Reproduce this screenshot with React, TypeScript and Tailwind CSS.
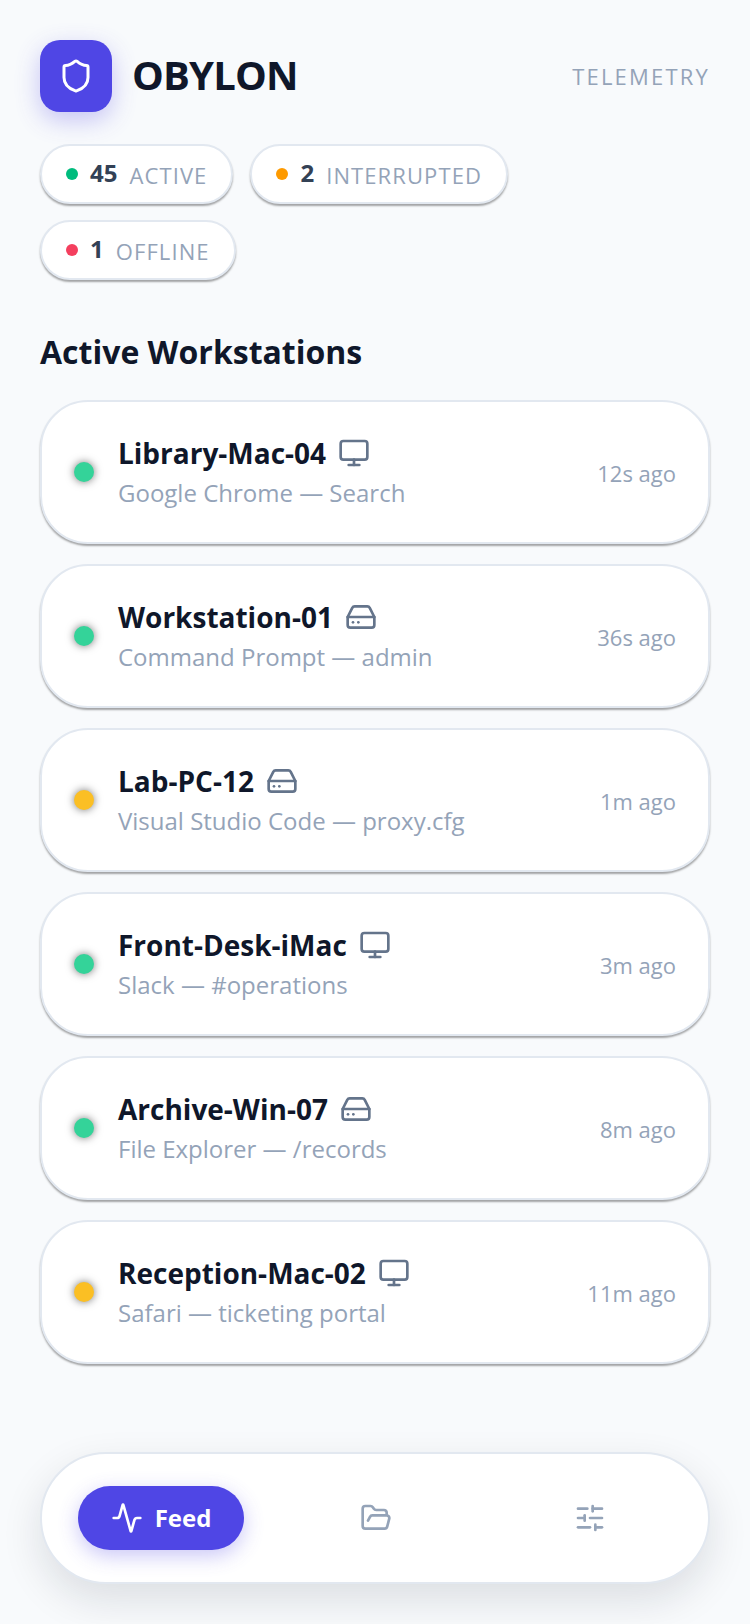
import { Activity, FolderOpen, HardDrive, Monitor, Shield, SlidersHorizontal } from 'lucide-react'

const stats = [
  { dot: 'bg-emerald-500', count: '45', label: 'ACTIVE' },
  { dot: 'bg-amber-500', count: '2', label: 'INTERRUPTED' },
  { dot: 'bg-[#f43f5e]', count: '1', label: 'OFFLINE' },
]

const stations = [
  { name: 'Library-Mac-04', app: 'Google Chrome — Search', time: '12s ago', dot: 'bg-[#34d399]', mac: true },
  { name: 'Workstation-01', app: 'Command Prompt — admin', time: '36s ago', dot: 'bg-[#34d399]', mac: false },
  { name: 'Lab-PC-12', app: 'Visual Studio Code — proxy.cfg', time: '1m ago', dot: 'bg-[#fbbf24]', mac: false },
  { name: 'Front-Desk-iMac', app: 'Slack — #operations', time: '3m ago', dot: 'bg-[#34d399]', mac: true },
  { name: 'Archive-Win-07', app: 'File Explorer — /records', time: '8m ago', dot: 'bg-[#34d399]', mac: false },
  { name: 'Reception-Mac-02', app: 'Safari — ticketing portal', time: '11m ago', dot: 'bg-[#fbbf24]', mac: true },
]

export default function App() {
  return (
    <div className="flex h-[1624px] w-[750px] flex-col overflow-hidden bg-[#f8fafc] px-10 pt-10 font-['Open_Sans',sans-serif]">
      <header className="flex h-[72px] items-center justify-between">
        <div className="flex items-center gap-5">
          <div className="flex h-[72px] w-[72px] items-center justify-center rounded-[20px] bg-[#4f46e5] shadow-[0_8px_24px_rgba(79,70,229,0.3)]">
            <Shield className="h-9 w-9 text-white" strokeWidth={2} />
          </div>
          <h1 className="mb-[2px] text-[40px] leading-[48px] font-bold tracking-[-0.8px] text-[#0f172a]">OBYLON</h1>
        </div>
        <span className="text-[22px] tracking-[2.2px] text-[#94a3b8]">TELEMETRY</span>
      </header>

      <div className="mt-8 flex flex-wrap gap-x-[17px] gap-y-4">
        {stats.map((s) => (
          <div
            key={s.label}
            className="flex h-[60px] items-center gap-3 rounded-full border-2 border-[#e2e8f0] bg-white px-6 shadow-[0_2px_2px_rgba(0,0,0,0.35)]"
          >
            <span className={`h-3 w-3 rounded-full ${s.dot}`} />
            <span className="mb-[2px] text-[24px] font-bold text-[#334155]">{s.count}</span>
            <span className="mt-[2px] text-[22px] tracking-[1.1px] text-[#94a3b8]">{s.label}</span>
          </div>
        ))}
      </div>

      <h2 className="mt-[52px] text-[32px] leading-10 font-bold text-[#0f172a]">Active Workstations</h2>

      <div className="mt-7 flex flex-col gap-5">
        {stations.map((st) => (
          <div
            key={st.name}
            className="flex h-[144px] items-center justify-between rounded-[48px] border-2 border-[#e2e8f0] bg-white px-8 shadow-[0_2px_2px_rgba(0,0,0,0.35)]"
          >
            <div className="flex items-center gap-6">
              <span className={`h-5 w-5 rounded-full ${st.dot} shadow-[0_0_8px_rgba(0,0,0,0.55)]`} />
              <div className="flex flex-col gap-[6px]">
                <div className="flex items-center gap-3">
                  <span className="text-[28px] leading-9 font-bold text-[#0f172a]">{st.name}</span>
                  {st.mac ? (
                    <Monitor className="h-8 w-8 text-[#64748b]" strokeWidth={2} />
                  ) : (
                    <HardDrive className="h-8 w-8 text-[#64748b]" strokeWidth={2} />
                  )}
                </div>
                <div className="text-[24px] leading-8 text-[#94a3b8]">{st.app}</div>
              </div>
            </div>
            <span className="mt-[2px] text-[22px] text-[#94a3b8]">{st.time}</span>
          </div>
        ))}
      </div>

      <nav className="mt-[88px] flex h-[132px] items-center rounded-full border-2 border-[#e2e8f0] bg-white pl-9 shadow-[0_16px_40px_rgba(15,23,42,0.12)]">
        <div className="flex h-16 w-[166px] items-center justify-center gap-3 rounded-full bg-[#4f46e5] shadow-[0_6px_20px_rgba(79,70,229,0.3)]">
          <Activity className="h-8 w-8 text-white" strokeWidth={2} />
          <span className="text-[24px] font-bold text-white">Feed</span>
        </div>
        <FolderOpen className="ml-[116px] h-8 w-8 text-[#94a3b8]" strokeWidth={2} />
        <SlidersHorizontal className="ml-[182px] h-8 w-8 text-[#94a3b8]" strokeWidth={2} />
      </nav>
    </div>
  )
}
